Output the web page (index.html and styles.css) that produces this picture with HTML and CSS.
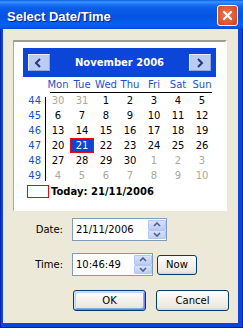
FILE: index.html
```html
<!DOCTYPE html>
<html>
<head>
<meta charset="utf-8">
<link rel="stylesheet" href="styles.css">
</head>
<body>
<div class="window">
  <div class="titlebar">
    <span class="title">Select Date/Time</span>
    <span class="close"><svg width="13" height="13" viewBox="0 0 13 13"><path d="M3 3 L10 10 M10 3 L3 10" stroke="#fff" stroke-width="2.2" stroke-linecap="round" fill="none"/></svg></span>
  </div>
  <div class="frame">
    <div class="client">
      <div class="calendar">
        <div class="cal-header">
          <span class="nav nav-prev"><svg width="8" height="10" viewBox="0 0 8 10"><polyline points="6,1 2,5 6,9" fill="none" stroke="#22397a" stroke-width="2"/></svg></span>
          <span class="month">November 2006</span>
          <span class="nav"><svg width="8" height="10" viewBox="0 0 8 10"><polyline points="2,1 6,5 2,9" fill="none" stroke="#22397a" stroke-width="2"/></svg></span>
        </div>
        <div class="cal-body">
          <div class="weeks">
            <span>44</span><span>45</span><span>46</span><span>47</span><span>48</span><span>49</span>
          </div>
          <div class="days">
            <div class="dow">
              <span>Mon</span><span>Tue</span><span>Wed</span><span>Thu</span><span>Fri</span><span>Sat</span><span>Sun</span>
            </div>
            <div class="dates">
              <span class="other">30</span><span class="other">31</span><span>1</span><span>2</span><span>3</span><span>4</span><span>5</span>
              <span>6</span><span>7</span><span>8</span><span>9</span><span>10</span><span>11</span><span>12</span>
              <span>13</span><span>14</span><span>15</span><span>16</span><span>17</span><span>18</span><span>19</span>
              <span>20</span><span class="selected">21</span><span>22</span><span>23</span><span>24</span><span>25</span><span>26</span>
              <span>27</span><span>28</span><span>29</span><span>30</span><span class="other">1</span><span class="other">2</span><span class="other">3</span>
              <span class="other">4</span><span class="other">5</span><span class="other">6</span><span class="other">7</span><span class="other">8</span><span class="other">9</span><span class="other">10</span>
            </div>
          </div>
        </div>
        <div class="today">
          <span class="today-box"></span>
          <span class="today-text">Today: 21/11/2006</span>
        </div>
      </div>
      <div class="form">
        <span class="label">Date:</span>
        <div class="field date-field">
          <span class="field-text">21/11/2006</span>
          <span class="spin">
            <span class="spin-btn"><svg width="8" height="5" viewBox="0 0 8 5"><polyline points="1,4 4,1 7,4" fill="none" stroke="#4d6185" stroke-width="1.6"/></svg></span>
            <span class="spin-btn"><svg width="8" height="5" viewBox="0 0 8 5"><polyline points="1,1 4,4 7,1" fill="none" stroke="#4d6185" stroke-width="1.6"/></svg></span>
          </span>
        </div>
        <span class="label">Time:</span>
        <div class="time-row">
          <div class="field time-field">
            <span class="field-text">10:46:49</span>
            <span class="spin">
              <span class="spin-btn"><svg width="8" height="5" viewBox="0 0 8 5"><polyline points="1,4 4,1 7,4" fill="none" stroke="#4d6185" stroke-width="1.6"/></svg></span>
              <span class="spin-btn"><svg width="8" height="5" viewBox="0 0 8 5"><polyline points="1,1 4,4 7,1" fill="none" stroke="#4d6185" stroke-width="1.6"/></svg></span>
            </span>
          </div>
          <button class="btn now">Now</button>
        </div>
        <div class="buttons">
          <button class="btn ok">OK</button>
          <button class="btn cancel">Cancel</button>
        </div>
      </div>
    </div>
  </div>
</div>
</body>
</html>
```
FILE: styles.css
```css
* { box-sizing: border-box; }
html, body { margin: 0; padding: 0; background: #fff; }
body { font-family: "DejaVu Sans", sans-serif; font-size: 10px; color: #000; }

.window {
  width: 243px;
  height: 328px;
  display: flex;
  flex-direction: column;
  background: #0a46dc;
  box-shadow: inset 1px 0 #0022a8, inset -1px 0 #0022a8, inset 0 -1px #0022a8;
}

.titlebar {
  height: 29px;
  flex: none;
  display: flex;
  align-items: center;
  justify-content: space-between;
  padding: 0 5px 0 7px;
  background: linear-gradient(to bottom, #0a5fe6 0px, #3d95ff 2px, #1f77f7 4px, #0a5ee8 8px, #0553e2 16px, #0660f0 25px, #0a58e6 27px, #0846d8 29px);
}
.title {
  font: bold 13px "Liberation Sans", sans-serif;
  color: #fff;
  text-shadow: 1px 1px #0a1d8c;
  margin-top: 3px;
}
.close {
  width: 21px;
  height: 21px;
  margin-top: 1px;
  border: 1px solid #fff;
  border-radius: 3px;
  background: radial-gradient(circle at 45% 45%, #ec7a55 0%, #e25a30 55%, #c8401f 100%);
  display: flex;
  align-items: center;
  justify-content: center;
}

.frame {
  flex: 1;
  display: flex;
  padding: 0 5px 5px 3px;
}
.client {
  flex: 1;
  background: #ece9d8;
  padding: 11px 0 0 10px;
}

.calendar {
  width: 214px;
  background: #fff;
  border-style: solid;
  border-width: 2px 2px 1px 1px;
  border-color: #a09e92 #fff #fff #aca899;
  padding: 6px 9px 12px 9px;
}
.cal-header {
  height: 29px;
  background: #0b46d8;
  display: flex;
  align-items: center;
  justify-content: space-between;
  padding: 0 5px;
}
.nav {
  width: 22px;
  height: 17px;
  background: #bccbf0;
  border: 1px solid;
  border-color: #e8eefc #8fa5da #8fa5da #e8eefc;
  display: flex;
  align-items: center;
  justify-content: center;
}
.nav-prev svg { margin-right: 3px; }
.month { color: #fff; font-weight: bold; }

.cal-body { display: flex; }
.weeks {
  width: 23px;
  padding: 16px 5px 0 0;
  display: flex;
  flex-direction: column;
  align-items: flex-end;
  color: #1552d6;
  background: linear-gradient(#000, #000) no-repeat right 0 top 20px / 1px 84px;
}
.weeks span { height: 15px; line-height: 15px; }
.days { width: 168px; }
.dow {
  display: grid;
  grid-template-columns: repeat(7, 24px);
  height: 16px;
  padding-bottom: 1px;
  color: #1552d6;
  background: linear-gradient(#000, #000) no-repeat 4px 100% / 162px 1px;
}
.dow span, .dates span { text-align: center; line-height: 15px; }
.dates {
  display: grid;
  grid-template-columns: repeat(7, 24px);
  grid-auto-rows: 15px;
}
.dates .other { color: #aca899; }
.dates .selected {
  background: #0b46d8;
  color: #fff;
  border: 1px solid #ff0000;
  line-height: 13px;
}

.today {
  display: flex;
  align-items: center;
  height: 13px;
  margin-top: 2px;
}
.today-box {
  width: 22px;
  height: 13px;
  border: 1px solid #ff0000;
  margin: 0 2px 0 4px;
}
.today-text { font-weight: bold; }

.form {
  display: grid;
  grid-template-columns: 50px 1fr;
  column-gap: 9px;
  row-gap: 12px;
  align-items: center;
  margin-top: 7px;
}
.label { text-align: right; }
.field {
  height: 23px;
  border: 1px solid #7f9db9;
  background: #fff;
  display: flex;
}
.date-field { width: 95px; }
.time-field { width: 81px; }
.field-text { flex: 1; padding-left: 3px; line-height: 21px; }
.spin {
  width: 18px;
  margin: 1px 0;
  display: flex;
  flex-direction: column;
}
.spin-btn {
  flex: 1;
  display: flex;
  align-items: center;
  justify-content: center;
  background: linear-gradient(#d8e2fc, #bccdf6);
  border: 1px solid #b4c6f2;
  border-radius: 1px;
}
.time-row { display: flex; align-items: center; gap: 4px; }

.btn {
  font: inherit;
  color: #000;
  padding: 0;
  height: 21px;
  border: 1px solid #003c74;
  border-radius: 3px;
  background: linear-gradient(#ffffff, #f4f3ee 40%, #ebe9e0 85%, #d8d3c6);
}
.now { width: 40px; height: 20px; }
.buttons { display: flex; gap: 10px; margin: 2px 0 0 1px; grid-column: 2; }
.ok, .cancel { width: 73px; }
.ok {
  box-shadow: inset 1px 1px 0 #cee7ff, inset -1px -1px 0 #6982ee, inset 2px 2px 0 #bcd4f6, inset -2px -2px 0 #89ade4;
}
```
